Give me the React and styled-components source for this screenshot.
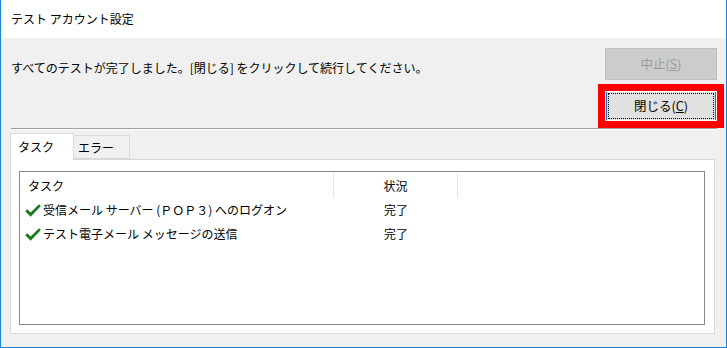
import React from 'react'
import styled, { createGlobalStyle } from 'styled-components'

const GlobalStyle = createGlobalStyle`
  html, body {
    margin: 0;
    padding: 0;
    background: #fff;
  }
  body {
    font-family: "Noto Sans CJK JP", "Noto Sans", sans-serif;
    font-size: 12px;
    color: #000;
  }
`

const Window = styled.div`
  width: 727px;
  height: 348px;
  box-sizing: border-box;
  border: 1px solid #1883d7;
  border-top: none;
  display: flex;
  flex-direction: column;
  background: #f0f0f0;
`

const TitleBar = styled.div`
  height: 38px;
  flex-shrink: 0;
  background: #fff;
  display: flex;
  align-items: center;
  padding-left: 10px;
  font-size: 12px;
  line-height: 16px;
`

const Body = styled.div`
  flex: 1;
  display: flex;
  flex-direction: column;
  padding: 10px 9px 13px 9px;
  min-height: 0;
`

const Header = styled.div`
  display: flex;
  justify-content: space-between;
  align-items: flex-start;
`

const Message = styled.div`
  padding: 11px 0 0 1px;
  line-height: 18px;
`

const ButtonColumn = styled.div`
  display: flex;
  flex-direction: column;
  gap: 10px;
`

const Button = styled.div`
  position: relative;
  width: 112px;
  height: 32px;
  box-sizing: border-box;
  display: flex;
  align-items: center;
  justify-content: center;
  line-height: 16px;
  font-size: 12.5px;
  border: ${(p) => (p.$focused ? '2px solid #0078d7' : '1px solid #bfbfbf')};
  background: ${(p) => (p.$disabled ? '#cccccc' : '#e1e1e1')};
  color: ${(p) => (p.$disabled ? '#9a9a9a' : '#000')};

  ${(p) =>
    p.$focused &&
    `
    &::after {
      content: '';
      position: absolute;
      inset: 1px;
      border: 1px dotted #000;
    }
  `}
`

const Highlight = styled.div`
  position: absolute;
  inset: -8px -9px -8px -9px;
  border: 7px solid #ff0000;
  box-shadow: inset 0 0 0 1px #fff;
  pointer-events: none;
`

const Separator = styled.div`
  margin-top: 6px;
  margin-left: 1px;
  border-top: 1px solid #a0a0a0;
  border-bottom: 1px solid #fff;
`

const TabRow = styled.div`
  margin-top: 3px;
  height: 26px;
  display: flex;
  align-items: flex-end;
  position: relative;
  z-index: 1;
`

const Tab = styled.div`
  box-sizing: border-box;
  width: ${(p) => (p.$active ? '64px' : '56px')};
  height: ${(p) => (p.$active ? '27px' : '24px')};
  margin-bottom: ${(p) => (p.$active ? '-1px' : '0')};
  padding: ${(p) => (p.$active ? '0 0 0 7px' : '2px 0 0 4px')};
  display: flex;
  align-items: center;
  line-height: 16px;
  border: 1px solid #d9d9d9;
  border-bottom: ${(p) => (p.$active ? 'none' : '1px solid #d9d9d9')};
  border-left: ${(p) => (p.$active ? '1px solid #d9d9d9' : 'none')};
  background: ${(p) => (p.$active ? '#fff' : '#f0f0f0')};
`

const Panel = styled.div`
  flex: 1;
  display: flex;
  margin-right: 2px;
  padding: 11px 9px 8px 8px;
  background: #fff;
  border: 1px solid #d9d9d9;
  min-height: 0;
`

const ListView = styled.div`
  flex: 1;
  border: 1px solid #828790;
  background: #fff;
`

const ListRow = styled.div`
  display: grid;
  grid-template-columns: 314px 124px 1fr;
  height: ${(p) => (p.$head ? '26px' : '24px')};
`

const Cell = styled.div`
  display: flex;
  align-items: center;
  justify-content: ${(p) => (p.$center ? 'center' : 'flex-start')};
  padding-left: ${(p) => (p.$center ? '0' : p.$head ? '8px' : '5px')};
  line-height: 16px;
  white-space: pre;
  border-right: ${(p) => (p.$head ? '1px solid #e5e5e5' : 'none')};
  ${(p) => p.$head && 'margin-top: 1px;'}
`

const CheckIcon = styled.svg`
  width: 16px;
  height: 13px;
  margin-right: 2px;
  flex-shrink: 0;
`

function Check() {
  return (
    <CheckIcon viewBox="0 0 16 13">
      <path d="M0.3 7.2 L2.2 5.2 L5.6 8.6 L14 0.2 L15.9 2 L5.6 12.8 Z" fill="#1a7a1a" />
    </CheckIcon>
  )
}

const tasks = [
  { name: '受信メール サーバー (ＰＯＰ３) へのログオン', status: '完了' },
  { name: 'テスト電子メール メッセージの送信', status: '完了' },
]

export default function App() {
  return (
    <>
      <GlobalStyle />
      <Window>
        <TitleBar>テスト アカウント設定</TitleBar>
        <Body>
          <Header>
            <Message>すべてのテストが完了しました。[閉じる] をクリックして続行してください。</Message>
            <ButtonColumn>
              <Button $disabled>
                中止(<u>S</u>)
              </Button>
              <Button $focused>
                閉じる(<u>C</u>)
                <Highlight />
              </Button>
            </ButtonColumn>
          </Header>
          <Separator />
          <TabRow>
            <Tab $active>タスク</Tab>
            <Tab>エラー</Tab>
          </TabRow>
          <Panel>
            <ListView>
              <ListRow $head>
                <Cell $head>タスク</Cell>
                <Cell $head $center>状況</Cell>
                <Cell />
              </ListRow>
              {tasks.map((t) => (
                <ListRow key={t.name}>
                  <Cell>
                    <Check />
                    {t.name}
                  </Cell>
                  <Cell $center>{t.status}</Cell>
                  <Cell />
                </ListRow>
              ))}
            </ListView>
          </Panel>
        </Body>
      </Window>
    </>
  )
}
